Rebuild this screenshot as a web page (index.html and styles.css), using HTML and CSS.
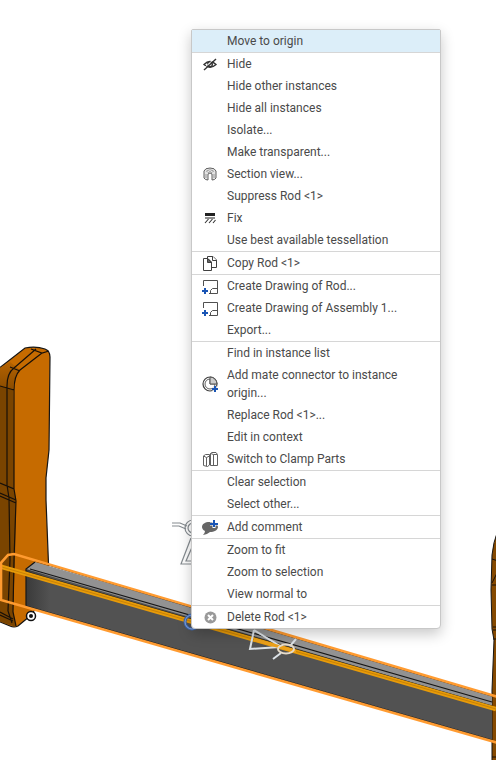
FILE: index.html
```html
<!DOCTYPE html>
<html lang="en">
<head>
<meta charset="utf-8">
<title>Assembly 1</title>
<link rel="stylesheet" href="styles.css">
</head>
<body>
<main class="workspace">
<svg class="scene" viewBox="0 0 496 760" preserveAspectRatio="xMinYMin slice" aria-hidden="true">
  <defs>
    <linearGradient id="end" x1="26" x2="50" y1="0" y2="0" gradientUnits="userSpaceOnUse"><stop stop-color="#3a3a3a"/><stop offset="1" stop-color="#525252"/></linearGradient>
    <linearGradient id="cap" x1="0" x2="0" y1="350" y2="390" gradientUnits="userSpaceOnUse"><stop stop-color="#c66b00"/><stop offset="1" stop-color="#8a4c00"/></linearGradient>
  </defs>
  <!-- left clamp -->
  <path d="M-2 369 25 348Q36 346 45 349Q50 351 50 357L49 450 46 478V500L48.500 564V592L30 616 18 626Q14 628 10 626L-2 621Z" fill="#c66b00" stroke="#151515" stroke-width="1.200"/>
  <path d="M-2 385 13 390Q14 430 14 489L16 500 15 560 13 611 16 627 -2 621Z" fill="#7a4400"/>
  <path d="M-2 369 10 362 20 370Q13 377 13 390L-2 385Z" fill="url(#cap)"/>
  <g fill="none" stroke="#181008" stroke-width="1.200">
    <path d="M14 489V390Q14 376 20 370L42 353M7 485V386Q7 373 14 368L36 349M10 367 20 371M31 349 42 353 49 351M0 386 14 390M0 483 14 489 16 501 14 560 13 612 16 626M7 485 9 498 10 560 8 611 12 623M0 493 16 500M0 496 16 503M0 612 13 619M0 615 13 621"/>
  </g>
  <!-- right clamp -->
  <path d="M498 530Q493 543 492 555L491 590 492 629 494 640 492 690V762H498Z" fill="#854900" stroke="#151515"/>
  <path d="M492 559 498 561M492 583 498 571M492 585H498M493 627H498M493 630H498M493 639H498M492 757H498" stroke="#181008"/>
  <!-- rod -->
  <path d="M26 570 33 563 492 695V740L26 606Z" fill="url(#end)"/>
  <path d="M26 569 35 562 492 695V706Z" fill="#929292"/>
  <path d="M35 561 492 696M30 569 492 702M27 572 492 706M26 606 492 740M26 606V569L35 562" fill="none" stroke="#161616" stroke-width="1.200"/>
  <path d="M0 566.500 496 709" stroke="#e89b08" stroke-width="4.500"/>
  <path d="M0 566.500 496 709" stroke="#c78208" stroke-width="1"/>
  <path d="M0 564 8 555 14 554 498 697M1 563V600L498 743" fill="none" stroke="#ff9b30" stroke-width="2.600"/>
  <!-- mate markers -->
  <circle cx="31" cy="616" r="4.500" fill="#fff" stroke="#111" stroke-width="1.500"/>
  <circle cx="31" cy="616" r="2" fill="#111"/>
  <g fill="none" stroke="#858b90" stroke-width="1.200">
    <path d="M172 523H180L187 526M172 526H179L186 529"/>
    <circle cx="193" cy="528" r="8"/><circle cx="193" cy="528" r="5"/>
    <path d="M191 538 181 564H195M193 545 186 561H195"/>
  </g>
  <circle cx="192" cy="622" r="7" fill="none" stroke="#3c66af" stroke-width="3"/>
  <circle cx="192" cy="622" r="7" fill="none" stroke="#89aae0"/>
  <g fill="none" stroke="#dce2e7" stroke-width="2">
    <path d="M254 630 250 649 280 647M254 630 280 646M296 639 290 646M281 653 273 659"/>
  </g>
  <path d="M254 639.500 296 651.500" stroke="#eca11b" stroke-width="3"/>
  <ellipse cx="286" cy="649" rx="8" ry="4.500" fill="none" stroke="#e6dccb" stroke-width="2"/>
</svg>

<nav class="menu" aria-label="Rod actions">
  <div class="group">
    <button class="item active" type="button"><span class="icon"></span><span>Move to origin</span></button>
  </div>
  <div class="group">
    <button class="item" type="button"><span class="icon"><svg viewBox="0 0 18 18"><g fill="none" stroke="#333" stroke-width="1.400"><path d="M3 9.500Q9 3.500 15 9.500Q9 15 3 9.500Z"/><circle cx="9" cy="9.500" r="2.300"/><path d="M3 15 15 4"/></g><path d="M2 14 14 3" stroke="#fff"/></svg></span><span>Hide</span></button>
    <button class="item" type="button"><span class="icon"></span><span>Hide other instances</span></button>
    <button class="item" type="button"><span class="icon"></span><span>Hide all instances</span></button>
    <button class="item" type="button"><span class="icon"></span><span>Isolate...</span></button>
    <button class="item" type="button"><span class="icon"></span><span>Make transparent...</span></button>
    <button class="item" type="button"><span class="icon"><svg viewBox="0 0 18 18"><path d="M3 6Q4 3 9 3T15 6V13Q14 15 11 15V9L9 8 7 9V15Q4 15 3 13Z" fill="#e4e4e4" stroke="#606060"/><path d="M5.500 6Q9 3.500 12.500 6L11 7.500 9 6.500 7 7.500Z" fill="#fff" stroke="#808080" stroke-width=".8"/><path d="M5 9V13M13 9V13" stroke="#999"/></svg></span><span>Section view...</span></button>
    <button class="item" type="button"><span class="icon"></span><span>Suppress Rod &lt;1&gt;</span></button>
    <button class="item" type="button"><span class="icon"><svg viewBox="0 0 18 18"><path d="M4 4H14V7H4ZM4 8.500H14V9.500H4Z" fill="#222"/><path d="M4 14 7.500 10M8 14 11.500 10M12 14 14.500 11" stroke="#333" stroke-width="1.100"/></svg></span><span>Fix</span></button>
    <button class="item" type="button"><span class="icon"></span><span>Use best available tessellation</span></button>
  </div>
  <div class="group">
    <button class="item" type="button"><span class="icon"><svg viewBox="0 0 18 18"><g fill="#fff" stroke="#404040"><path d="M6.500 2.500H12L15.500 6V13.500H6.500Z"/><path d="M11.500 2.500V6.500H15.500"/><path d="M2.500 4.500H7L10.500 8V16.500H2.500Z"/><path d="M6.500 4.500V8.500H10.500Z" fill="#666"/></g></svg></span><span>Copy Rod &lt;1&gt;</span></button>
  </div>
  <div class="group">
    <button class="item" type="button"><span class="icon"><svg viewBox="0 0 18 18"><path d="M2.500 9V3.500H16.500V16.500H8M9.500 16.500V13.500L11.500 11.500H16.500" fill="none" stroke="#505050"/><path d="M4 11V17M1 14H7" stroke="#1955b5" stroke-width="2"/></svg></span><span>Create Drawing of Rod...</span></button>
    <button class="item" type="button"><span class="icon"><svg viewBox="0 0 18 18"><path d="M2.500 9V3.500H16.500V16.500H8M9.500 16.500V13.500L11.500 11.500H16.500" fill="none" stroke="#505050"/><path d="M4 11V17M1 14H7" stroke="#1955b5" stroke-width="2"/></svg></span><span>Create Drawing of Assembly 1...</span></button>
    <button class="item" type="button"><span class="icon"></span><span>Export...</span></button>
  </div>
  <div class="group">
    <button class="item" type="button"><span class="icon"></span><span>Find in instance list</span></button>
    <button class="item" type="button"><span class="icon"><svg viewBox="0 0 18 18"><circle cx="9" cy="9" r="7" fill="#fff" stroke="#404040" stroke-width="1.200"/><path d="M9 4A5 5 0 1 0 14 9H9Z" fill="#fff" stroke="#606060"/><path d="M9 2A7 7 0 0 1 16 9H9Z" fill="#ccc" stroke="#505050"/><path d="M14 11V17M11 14H17" stroke="#fff" stroke-width="3"/><path d="M14 11V17M11 14H17" stroke="#1955b5" stroke-width="2"/></svg></span><span>Add mate connector to instance origin...</span></button>
    <button class="item" type="button"><span class="icon"></span><span>Replace Rod &lt;1&gt;...</span></button>
    <button class="item" type="button"><span class="icon"></span><span>Edit in context</span></button>
    <button class="item" type="button"><span class="icon"><svg viewBox="0 0 18 18"><g fill="#fff" stroke="#606060"><path d="M2.500 6 4.500 4.500H8.500V15L6.500 16.500 2.500 15.500ZM2.500 6 5.500 7.500 8.500 6M5.500 7.500V16"/><path d="M9.500 3.500 11 2.500H15L16.500 4.500V15.500H9.500ZM9.500 3.500 12.500 4.500V15.500M12.500 4.500H16"/></g></svg></span><span>Switch to Clamp Parts</span></button>
  </div>
  <div class="group">
    <button class="item" type="button"><span class="icon"></span><span>Clear selection</span></button>
    <button class="item" type="button"><span class="icon"></span><span>Select other...</span></button>
  </div>
  <div class="group">
    <button class="item" type="button"><span class="icon"><svg viewBox="0 0 18 18"><path d="M8.500 4C13 4 17 6 17 9S13 14 9 14C7 15.500 5 16.500 2 17Q4 15 4 13C2 12 1 10.500 1 9 1 6 4 4 8.500 4Z" fill="#666"/><path d="M13 2V10M9 6H17" stroke="#fff" stroke-width="3"/><path d="M13 2V9M9 6H17" stroke="#1955b5" stroke-width="2"/></svg></span><span>Add comment</span></button>
  </div>
  <div class="group">
    <button class="item" type="button"><span class="icon"></span><span>Zoom to fit</span></button>
    <button class="item" type="button"><span class="icon"></span><span>Zoom to selection</span></button>
    <button class="item" type="button"><span class="icon"></span><span>View normal to</span></button>
  </div>
  <div class="group">
    <button class="item" type="button"><span class="icon"><svg viewBox="0 0 18 18"><circle cx="9.500" cy="9.500" r="6" fill="#999"/><path d="M7 7 12 12M12 7 7 12" stroke="#fff" stroke-width="2"/></svg></span><span>Delete Rod &lt;1&gt;</span></button>
  </div>
</nav>
</main>
</body>
</html>
```
FILE: styles.css
```css
* {
  box-sizing: border-box;
}

body {
  margin: 0;
  background: #fff;
  color: #4a4a4a;
  font: 12px/18px Roboto, sans-serif;
}

.workspace {
  position: relative;
  min-height: 100vh;
  overflow: hidden;
}

.scene {
  position: absolute;
  inset: 0;
  width: 100%;
  height: 100%;
}

.menu {
  position: absolute;
  top: 29px;
  left: 191px;
  width: 250px;
  border: 1px solid #c8c8c8;
  border-radius: 2px 2px 4px 4px;
  background: #fff;
  box-shadow: 0 5px 14px rgba(0, 0, 0, 0.22);
}

.group + .group {
  border-top: 1px solid #d6d6d6;
}

.item {
  display: flex;
  align-items: center;
  gap: 8px;
  width: 100%;
  padding: 2px 24px 2px 9px;
  border: 0;
  background: none;
  color: inherit;
  font: inherit;
  text-align: left;
}

.item:hover,
.active {
  background: #dceef9;
}

.icon {
  flex: none;
  width: 18px;
  height: 18px;
}

.icon svg {
  display: block;
  width: 100%;
  height: 100%;
  fill: none;
}
```
